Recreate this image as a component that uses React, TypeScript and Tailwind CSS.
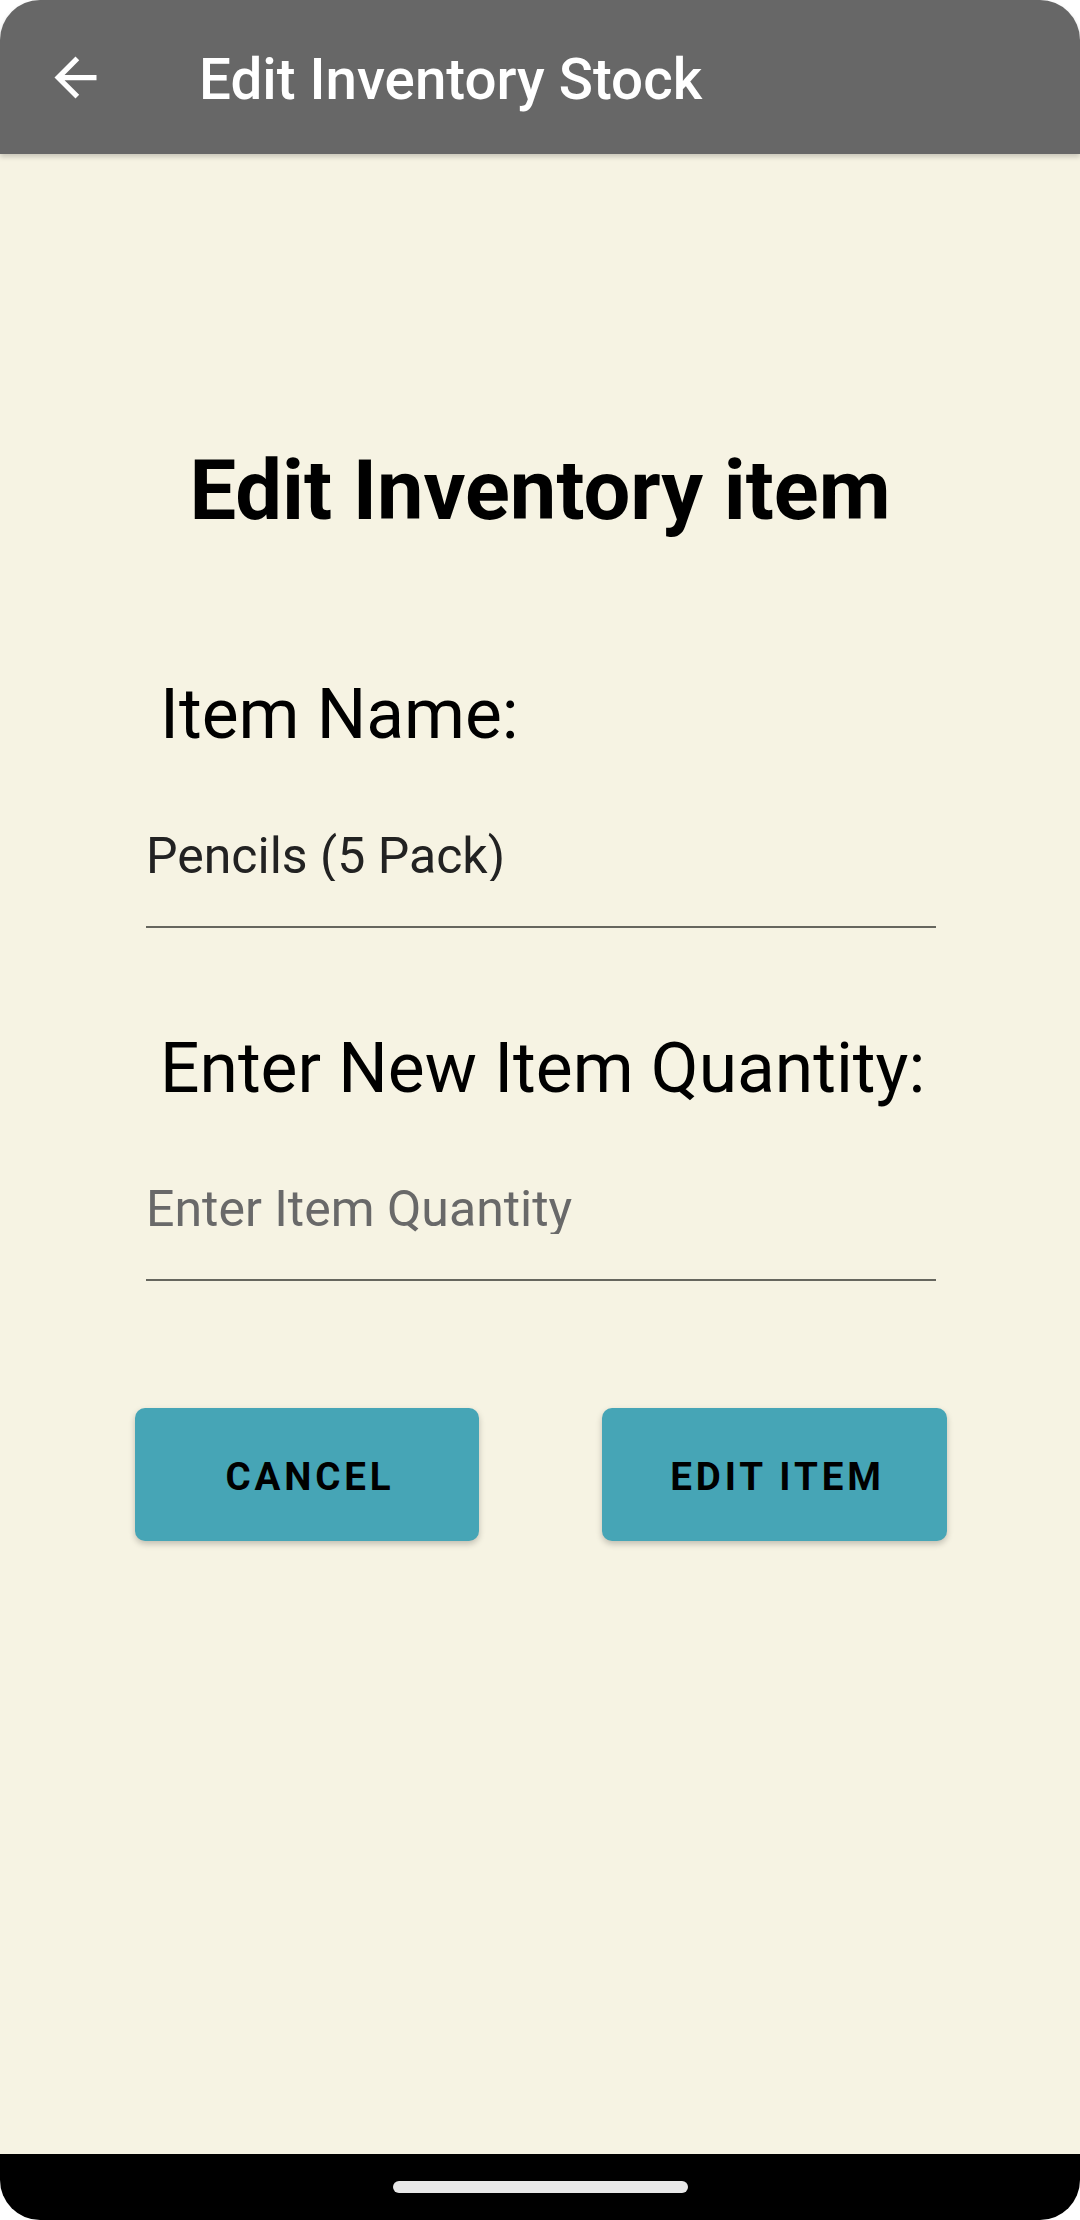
import { useState } from "react";

function BackArrow() {
  return (
    <svg viewBox="0 0 24 24" className="w-[63px] h-[63px] fill-white">
      <path d="M20 11H7.83l5.59-5.59L12 4l-8 8 8 8 1.41-1.41L7.83 13H20v-2z" />
    </svg>
  );
}

export default function App() {
  const [name, setName] = useState("Pencils (5 Pack)");
  const [qty, setQty] = useState("");

  return (
    <div className="w-[1080px] h-[2220px] bg-white flex flex-col font-['Roboto',_sans-serif]">
      <header className="relative z-10 h-[154px] shrink-0 bg-[#676767] rounded-t-[40px] flex items-center pl-[44px] shadow-[0_3px_5px_rgba(0,0,0,0.18)]">
        <BackArrow />
        <h1 className="ml-[92px] pt-[6px] text-[56.5px] font-medium text-white leading-none">
          Edit Inventory Stock
        </h1>
      </header>

      <main className="flex-1 bg-[#f6f3e3] flex flex-col">
        <h2 className="mt-[295px] text-center text-[83px] font-bold leading-none text-black">
          Edit Inventory item
        </h2>

        <label className="mt-[148px] pl-[160px] text-[69.5px] leading-none text-black">
          Item Name:
        </label>
        <div className="mt-[81px] ml-[146px] w-[790px] border-b-[2px] border-[#66665e] pb-[45px]">
          <input
            value={name}
            onChange={(e) => setName(e.target.value)}
            className="w-full h-[50px] p-0 bg-transparent outline-none text-[50px] leading-none text-[#222222]"
          />
        </div>

        <label className="mt-[106px] pl-[160px] text-[69.5px] leading-none text-black">
          Enter New Item Quantity:
        </label>
        <div className="mt-[81px] ml-[146px] w-[790px] border-b-[2px] border-[#66665e] pb-[45px]">
          <input
            value={qty}
            onChange={(e) => setQty(e.target.value)}
            placeholder="Enter Item Quantity"
            className="w-full h-[50px] p-0 bg-transparent outline-none text-[50px] leading-none text-[#222222] placeholder:text-[#696969]"
          />
        </div>

        <div className="mt-[127px] ml-[135px] flex gap-[123px]">
          <button className="w-[344px] h-[133px] pt-[4px] pl-[6px] rounded-[10px] bg-[#46a5b6] shadow-[0_3px_6px_rgba(0,0,0,0.22)] text-[38.5px] font-bold tracking-[0.1em] text-black">
            CANCEL
          </button>
          <button className="w-[345px] h-[133px] pt-[4px] pl-[6px] rounded-[10px] bg-[#46a5b6] shadow-[0_3px_6px_rgba(0,0,0,0.22)] text-[38.5px] font-bold tracking-[0.1em] text-black">
            EDIT ITEM
          </button>
        </div>
      </main>

      <footer className="h-[66px] shrink-0 bg-black rounded-b-[40px] flex justify-center pt-[27px]">
        <div className="w-[295px] h-[12px] rounded-full bg-[#e8e8e8]" />
      </footer>
    </div>
  );
}
